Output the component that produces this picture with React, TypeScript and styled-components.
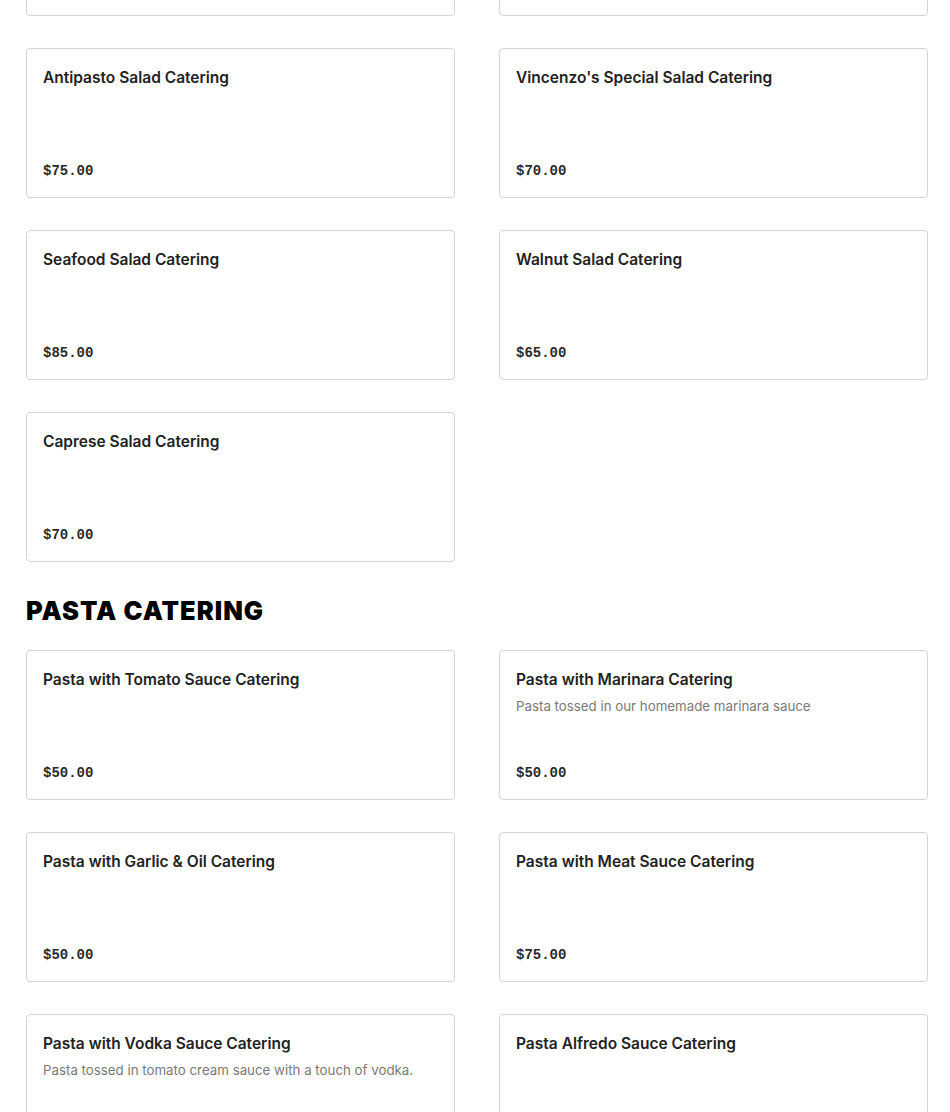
import React, { FunctionComponent } from "react"
import styled, { createGlobalStyle } from "styled-components"

const GlobalStyle = createGlobalStyle`
  html, body {
    margin: 0;
    padding: 0;
    background: #ffffff;
  }
  body {
    font-family: Inter, "Liberation Sans", sans-serif;
    color: #222222;
    overflow: hidden;
  }
`

interface ItemType {
  name: string
  description?: string
  price: string
}

interface SectionType {
  title?: string
  items: ItemType[]
}

const sections: SectionType[] = [
  {
    items: [
      { name: "House Salad Catering", price: "$60.00" },
      { name: "Caesar Salad Catering", price: "$60.00" },
      { name: "Antipasto Salad Catering", price: "$75.00" },
      { name: "Vincenzo's Special Salad Catering", price: "$70.00" },
      { name: "Seafood Salad Catering", price: "$85.00" },
      { name: "Walnut Salad Catering", price: "$65.00" },
      { name: "Caprese Salad Catering", price: "$70.00" },
    ],
  },
  {
    title: "PASTA CATERING",
    items: [
      { name: "Pasta with Tomato Sauce Catering", price: "$50.00" },
      {
        name: "Pasta with Marinara Catering",
        description: "Pasta tossed in our homemade marinara sauce",
        price: "$50.00",
      },
      { name: "Pasta with Garlic & Oil Catering", price: "$50.00" },
      { name: "Pasta with Meat Sauce Catering", price: "$75.00" },
      {
        name: "Pasta with Vodka Sauce Catering",
        description: "Pasta tossed in tomato cream sauce with a touch of vodka.",
        price: "$50.00",
      },
      { name: "Pasta Alfredo Sauce Catering", price: "$60.00" },
    ],
  },
]

// page is shown scrolled, so the first row of cards sits above the fold
const Page = styled.main`
  padding: 0 22px 0 26px;
  margin-top: -134px;
`

const Section = styled.section`
  display: flex;
  flex-direction: column;
`

const SectionTitle = styled.h2`
  margin: 33px 0 23px;
  font-family: Inter, "Liberation Sans", sans-serif;
  font-weight: 900;
  font-size: 25.5px;
  line-height: 32px;
  letter-spacing: 1px;
  color: #000000;
`

const ItemGrid = styled.div`
  display: grid;
  grid-template-columns: 1fr 1fr;
  column-gap: 44px;
  row-gap: 32px;
`

const Card = styled.div`
  box-sizing: border-box;
  height: 150px;
  padding: 17px 16px 16px;
  display: flex;
  flex-direction: column;
  justify-content: space-between;
  border: 1px solid #d4d4d4;
  border-radius: 4px;
  background: #ffffff;
`

const ItemName = styled.div`
  font-family: Inter, "Liberation Sans", sans-serif;
  font-weight: 600;
  font-size: 15.5px;
  line-height: 24px;
  color: #222222;
`

const ItemDescription = styled.div`
  margin-top: 4px;
  font-family: Inter, "Liberation Sans", sans-serif;
  font-weight: 400;
  font-size: 13.3px;
  line-height: 20px;
  color: #7a7a7a;
`

const Price = styled.div`
  font-family: "Liberation Mono", "DejaVu Sans Mono", monospace;
  font-weight: 700;
  font-size: 14px;
  line-height: 20px;
  color: #2a2a2a;
`

const MenuItem: FunctionComponent<{ item: ItemType }> = ({ item }) => (
  <Card>
    <div>
      <ItemName>{item.name}</ItemName>
      {item.description && <ItemDescription>{item.description}</ItemDescription>}
    </div>
    <Price>{item.price}</Price>
  </Card>
)

export default function App() {
  return (
    <>
      <GlobalStyle />
      <Page>
        {sections.map((section, i) => (
          <Section key={i}>
            {section.title && <SectionTitle>{section.title}</SectionTitle>}
            <ItemGrid>
              {section.items.map(item => (
                <MenuItem key={item.name} item={item} />
              ))}
            </ItemGrid>
          </Section>
        ))}
      </Page>
    </>
  )
}
